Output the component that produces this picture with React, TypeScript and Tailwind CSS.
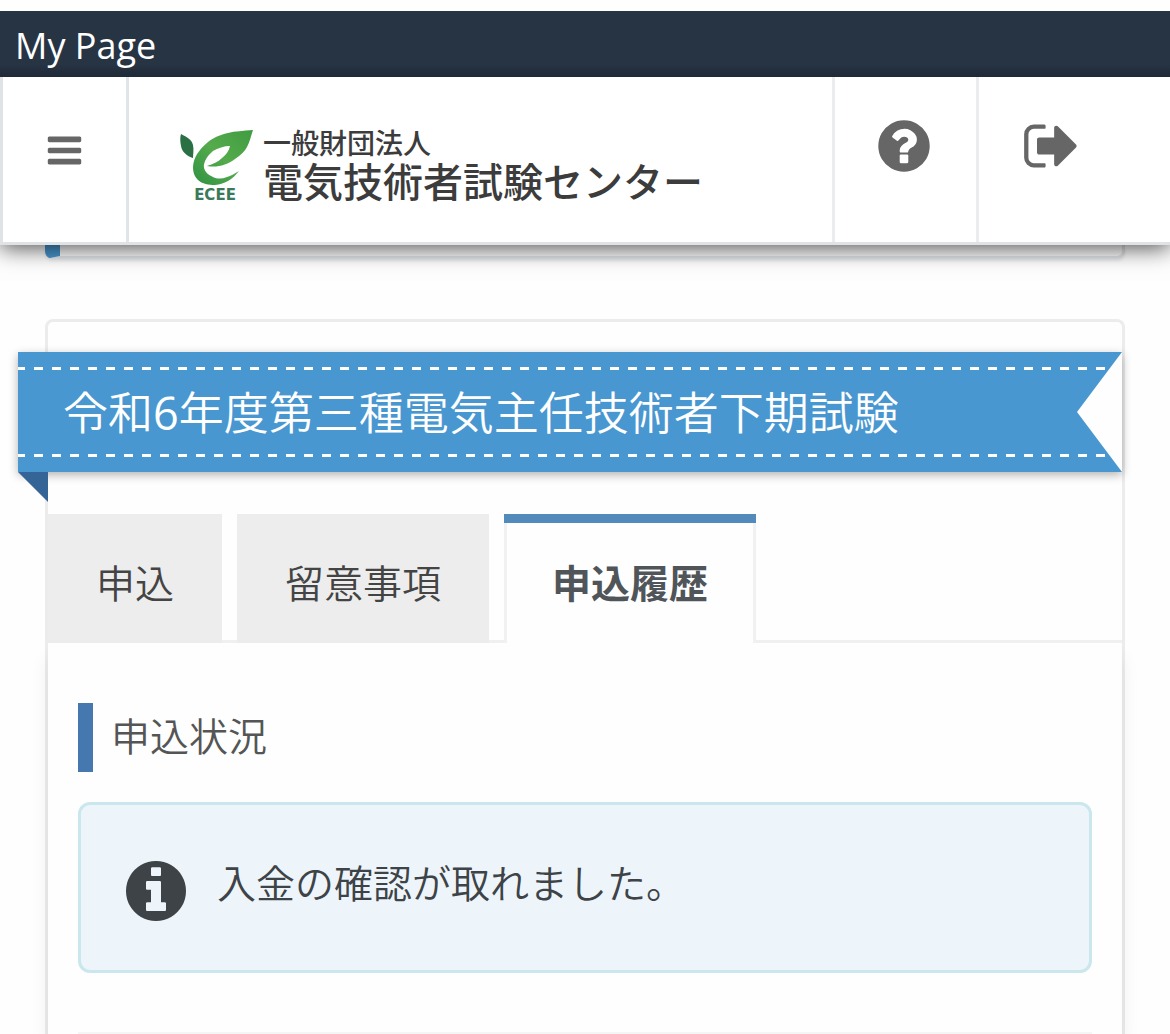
import React from "react";

const cjk = "font-['Open_Sans','Noto_Sans_CJK_JP',sans-serif]";

const CIRCLE =
  "M1664 896q0 209-103 385.5t-279.5 279.5-385.5 103-385.5-103-279.5-279.5-103-385.5 103-385.5 279.5-279.5 385.5-103 385.5 103 279.5 279.5 103 385.5z";

function Glyph({ d, className }: { d: string; className: string }) {
  return (
    <svg viewBox="0 0 1792 1792" className={className} fill="currentColor" fillRule="evenodd" aria-hidden="true">
      <path d={d} />
    </svg>
  );
}

const BARS =
  "M1664 1344v128q0 26-19 45t-45 19h-1408q-26 0-45-19t-19-45v-128q0-26 19-45t45-19h1408q26 0 45 19t19 45zM1664 832v128q0 26-19 45t-45 19h-1408q-26 0-45-19t-19-45v-128q0-26 19-45t45-19h1408q26 0 45 19t19 45zM1664 320v128q0 26-19 45t-45 19h-1408q-26 0-45-19t-19-45v-128q0-26 19-45t45-19h1408q26 0 45 19t19 45z";
const QUESTION =
  "M1024 1376v-192q0-14-9-23t-23-9h-192q-14 0-23 9t-9 23v192q0 14 9 23t23 9h192q14 0 23-9t9-23zM1280 704q0-88-55.5-163t-138.5-116-170-41q-243 0-371 213-15 24 8 42l132 100q7 6 19 6 16 0 25-12 53-68 86-92 34-24 86-24 48 0 85.5 26t37.5 59q0 38-20 61t-68 45q-63 28-115.5 86.5t-52.5 125.5v36q0 14 9 23t23 9h192q14 0 23-9t9-23q0-19 21.5-49.5t54.5-49.5q32-18 49-28.5t46-35 44.5-48 28-60.5 12.5-81z" +
  CIRCLE;
const INFO =
  "M1152 1376v-160q0-14-9-23t-23-9h-96v-512q0-14-9-23t-23-9h-320q-14 0-23 9t-9 23v160q0 14 9 23t23 9h96v320h-96q-14 0-23 9t-9 23v160q0 14 9 23t23 9h448q14 0 23-9t9-23zM1024 480v-160q0-14-9-23t-23-9h-192q-14 0-23 9t-9 23v160q0 14 9 23t23 9h192q14 0 23-9t9-23z" +
  CIRCLE;
const SIGN_OUT =
  "M704 1440q0 4 1 20t.5 26.5-3 23.5-10 19.5-20.5 6.5h-320q-119 0-203.5-84.5t-84.5-203.5v-704q0-119 84.5-203.5t203.5-84.5h320q13 0 22.5 9.5t9.5 22.5q0 4 1 20t.5 26.5-3 23.5-10 19.5-20.5 6.5h-320q-66 0-113 47t-47 113v704q0 66 47 113t113 47h312l11.5 1 11.5 3 8 5.5 7 9 2 13.5zM1632 896q0 26-19 45l-544 544q-19 19-45 19t-45-19-19-45v-288h-448q-26 0-45-19t-19-45v-384q0-26 19-45t45-19h448v-288q0-26 19-45t45-19 45 19l544 544q19 19 19 45z";

function LeafMark() {
  return (
    <svg viewBox="0 0 76 60" className="h-[60px] w-[76px]" aria-hidden="true">
      <defs>
        <linearGradient id="leaf" x1="0" y1="1" x2="1" y2="0">
          <stop offset="0" stopColor="#2f9144" />
          <stop offset="0.5" stopColor="#55ab4c" />
          <stop offset="1" stopColor="#3f9c40" />
        </linearGradient>
      </defs>
      <path d="M2 6C8 9 13 12 14 17C15 22 14 26 14 30C8 28 3 24 2 18C1 13 1 9 2 6Z" fill="#2a7044" />
      <path
        d="M74 2C64 3 56 3 49 5C40 7 34 10 29 14C22 20 17 26 15 33C13 40 14 47 19 52C23 56 30 57 36 57C46 56 54 51 60 43C55 46 52 48 48 49C43 51 38 51 34 49C29 47 26 44 25 40C24 34 29 27 34 23C39 20 45 18 51 18C50 23 47 27 43 30C39 34 34 36 28 38C38 40 48 37 56 31C62 27 66 23 68 19C71 13 72 8 74 2Z"
        fill="url(#leaf)"
      />
    </svg>
  );
}

const dash =
  "h-[3px] bg-[linear-gradient(90deg,#fff_50%,transparent_50%)] bg-[length:18px_3px] bg-[position:-2px_0]";

export default function App() {
  return (
    <div className={`flex min-h-screen flex-col overflow-x-clip bg-[#fefefe] pt-[11px] text-[#444] ${cjk}`}>
      <header className="relative z-10 shadow-[0_3px_22px_rgba(0,0,0,0.7)] [clip-path:inset(0_0_-40px_0)]">
        <div className="bg-[linear-gradient(#273444_80%,#1f2937)] px-[15px] pt-[11px] pb-[7px] text-[36px] leading-[48px] text-white">
          My Page
        </div>
        <nav className="flex h-[168px] border-b-[3px] border-l-[3px] border-[#dfe3e6] bg-white text-[#666]">
          <button type="button" aria-label="メニュー" className="flex w-[126px] items-start border-r-[3px] border-[#e1e5e9] pt-[54px] pl-[42px]">
            <Glyph d={BARS} className="size-[39px]" />
          </button>
          <a href="#home" className="flex flex-1 items-start pt-[51px] pl-[50px] font-['Noto_Sans_CJK_JP',sans-serif] font-medium text-[#3c3c3c]">
            <span className="flex flex-col items-center">
              <LeafMark />
              <span className="pr-1 font-['DejaVu_Sans',sans-serif] text-[15px] leading-[14px] font-bold text-[#3a7a58]">ECEE</span>
            </span>
            <span className="ml-2 flex flex-col whitespace-nowrap">
              <span className="text-[28px] leading-[28px]">一般財団法人</span>
              <span className="text-[40px] leading-[48px]">電気技術者試験センター</span>
            </span>
          </a>
          <button type="button" aria-label="ヘルプ" className="flex w-[147px] items-start border-x-[3px] border-[#eaecee] pt-[39px] pl-[39px]">
            <Glyph d={QUESTION} className="size-[60px]" />
          </button>
          <button type="button" aria-label="ログアウト" className="flex w-[191px] items-start pt-[39px] pl-[43px]">
            <Glyph d={SIGN_OUT} className="size-[60px]" />
          </button>
        </nav>
      </header>

      <div className="mx-[45px] h-[14px] shrink-0 rounded-b-[8px] border-r-[3px] border-b-[3px] border-l-[15px] border-r-[#e4e6e8] border-b-[#e3e8ed] border-l-[#4897cf] bg-white shadow-[0_2px_3px_rgba(0,0,0,0.08)]" />

      <main className="mx-[45px] mt-[60px] flex flex-1 flex-col rounded-t-[8px] border-[3px] border-b-0 border-[#ececec] bg-[#fefefe] pt-[30px]">
        <div className="relative -ml-[30px]">
          <div className="relative bg-[#4897d0] py-[15px] shadow-[0_3px_9px_rgba(0,0,0,0.3)]">
            <div className={dash} />
            <h1 className="pt-[9px] pb-[7px] pl-[45px] text-[45px] leading-[68px] font-[350] whitespace-nowrap text-white">
              令和<span className="font-normal">6</span>年度第三種電気主任技術者下期試験
            </h1>
            <div className={dash} />
            <div className="absolute inset-y-0 right-0 w-[45px] bg-[#fefefe] [clip-path:polygon(100%_0,0_50%,100%_100%)]" />
          </div>
          <div className="absolute top-full left-0 size-[30px] bg-[#356496] [clip-path:polygon(0_0,100%_0,100%_100%)]" />
        </div>

        <div role="tablist" className="mt-[42px] flex text-[39px] leading-[58px]">
          <button type="button" role="tab" aria-selected="false" className="border-b-[3px] border-[#ececec] bg-[#ededed] px-12 pt-10 pb-7 font-[350]">
            申込
          </button>
          <div className="w-[15px] border-b-[3px] border-[#f0f0f0]" />
          <button type="button" role="tab" aria-selected="false" className="border-b-[3px] border-[#ececec] bg-[#ededed] px-12 pt-10 pb-7 font-[350]">
            留意事項
          </button>
          <div className="w-[15px] border-b-[3px] border-[#f0f0f0]" />
          <button
            type="button"
            role="tab"
            aria-selected="true"
            className="relative border-x-[3px] border-[#f1f1f1] px-[45px] pt-10 pb-[31px] font-bold text-[#50555a] before:absolute before:-inset-x-[3px] before:top-0 before:h-[9px] before:bg-[#528bbb]"
          >
            申込履歴
          </button>
          <div className="flex-1 border-b-[3px] border-[#f0f0f0]" />
        </div>

        <section role="tabpanel" className="flex flex-1 flex-col px-[30px] pt-[60px] shadow-[0_15px_18px_rgba(0,0,0,0.07)] [clip-path:inset(0_-30px_0_-30px)]">
          <h2 className="border-l-[15px] border-[#4678b0] pt-1 pb-[7px] pl-[18px] text-[39px] leading-[58px] font-[350] text-[#555]">
            申込状況
          </h2>
          <div className="mt-[30px] flex items-start rounded-[12px] border-[3px] border-[#c9e7ec] bg-[#edf5fb] px-10 pt-[50px] pb-11 text-[#3d4347]">
            <Glyph d={INFO} className="mt-px size-[70px] shrink-0" />
            <p className="ml-[26px] text-[39px] leading-[56px] font-[350]">入金の確認が取れました。</p>
          </div>
          <hr className="mt-[59px] border-t-2 border-[#f5f5f5]" />
        </section>
      </main>
    </div>
  );
}
